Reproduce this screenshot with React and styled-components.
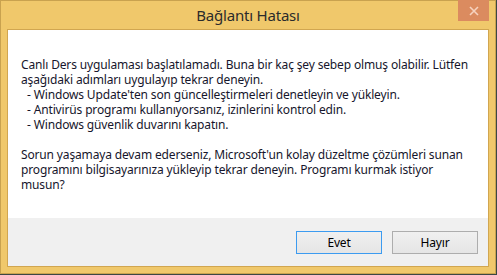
import styled, { createGlobalStyle } from 'styled-components';

const GlobalStyle = createGlobalStyle`
  html, body {
    margin: 0;
    padding: 0;
    background: #3b4744;
  }
  body {
    font-family: 'Noto Sans', 'Open Sans', sans-serif;
  }
`;

const Window = styled.div`
  position: relative;
  box-sizing: border-box;
  width: 496px;
  height: 274px;
  border: 1px solid #c9a24f;
  background: #f0c86b;
  padding: 0 6px 6px 6px;
  display: flex;
  flex-direction: column;
`;

const TitleBar = styled.div`
  height: 28px;
  line-height: 28px;
  text-align: center;
  font-size: 15px;
  letter-spacing: -0.2px;
  color: #2b2b2b;
`;

const CloseButton = styled.div`
  position: absolute;
  top: -1px;
  right: 6px;
  width: 31px;
  height: 21px;
  background: #db8b5f;
  display: flex;
  align-items: center;
  justify-content: center;
`;

const Client = styled.div`
  flex: 1;
  border: 1px solid #d1a650;
  background: #ffffff;
  display: flex;
  flex-direction: column;
`;

const Message = styled.div`
  flex: 1;
  padding: 27px 13px 0 13px;
  font-size: 12px;
  line-height: 15px;
  letter-spacing: -0.15px;
  white-space: nowrap;
  color: #16162c;
`;

const Paragraph = styled.div`
  margin: 0 0 15px 0;
`;

const List = styled.ul`
  list-style: none;
  margin: 0;
  padding: 0 0 0 6px;
`;

const Footer = styled.div`
  height: 48px;
  box-sizing: border-box;
  background: #f0f0f0;
  display: flex;
  justify-content: flex-end;
  align-items: flex-start;
  gap: 10px;
  padding: 13px 10px 0 0;
`;

const Button = styled.button`
  box-sizing: border-box;
  width: 86px;
  height: 23px;
  padding: 0;
  font-family: 'Noto Sans', 'Open Sans', sans-serif;
  font-size: 12px;
  letter-spacing: -0.2px;
  color: #000;
  background: linear-gradient(#f0f0f0, #e5e5e5);
  border: 1px solid ${(p) => (p.$default ? '#3c9bf0' : '#adadad')};
  outline: none;
`;

export default function App() {
  return (
    <>
      <GlobalStyle />
      <Window>
        <TitleBar>Bağlantı Hatası</TitleBar>
        <CloseButton>
          <svg width="10" height="10" viewBox="0 0 10 10">
            <path d="M1 1 L9 9 M9 1 L1 9" stroke="#f6d3bf" strokeWidth="1.6" />
          </svg>
        </CloseButton>
        <Client>
          <Message>
            <Paragraph>
              Canlı Ders uygulaması başlatılamadı. Buna bir kaç şey sebep olmuş olabilir. Lütfen
              <br />
              aşağıdaki adımları uygulayıp tekrar deneyin.
              <List>
                <li>- Windows Update'ten son güncelleştirmeleri denetleyin ve yükleyin.</li>
                <li>- Antivirüs programı kullanıyorsanız, izinlerini kontrol edin.</li>
                <li>- Windows güvenlik duvarını kapatın.</li>
              </List>
            </Paragraph>
            <Paragraph>
              Sorun yaşamaya devam ederseniz, Microsoft'un kolay düzeltme çözümleri sunan
              <br />
              programını bilgisayarınıza yükleyip tekrar deneyin. Programı kurmak istiyor
              <br />
              musun?
            </Paragraph>
          </Message>
          <Footer>
            <Button $default>Evet</Button>
            <Button>Hayır</Button>
          </Footer>
        </Client>
      </Window>
    </>
  );
}
